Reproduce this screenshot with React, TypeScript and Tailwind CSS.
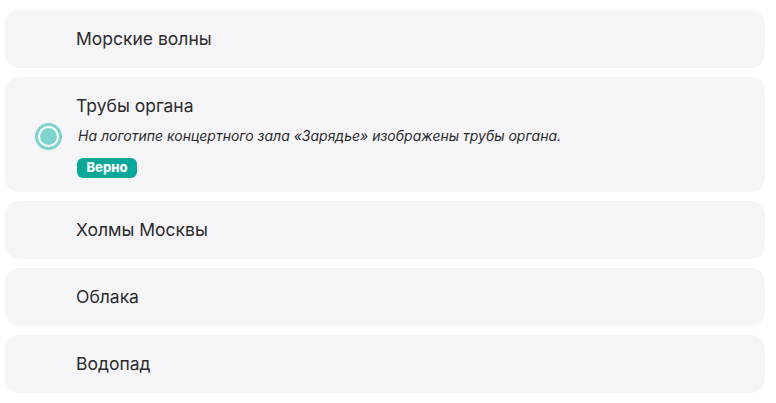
const options = [
  { title: "Морские волны" },
  {
    title: "Трубы органа",
    selected: true,
    note: "На логотипе концертного зала «Зарядье» изображены трубы органа.",
  },
  { title: "Холмы Москвы" },
  { title: "Облака" },
  { title: "Водопад" },
];

export default function App() {
  return (
    <main className="w-[776px] h-[403px] bg-white px-[5px] pt-[10px] font-['Inter',sans-serif] text-[#2b2b2d]">
      <ul className="flex flex-col gap-[9px] w-[760px]">
        {options.map((item, index) =>
          item.selected ? (
            <li
              key={index}
              className="relative flex flex-col items-start rounded-[14px] bg-[#f5f5f7] pl-[71px] pt-[18px] pb-[14px] h-[115px]"
            >
              <span className="absolute left-[30px] top-[46px] flex h-[27px] w-[27px] items-center justify-center rounded-full border-[3px] border-[#7ed3cc] bg-white">
                <span className="h-[17px] w-[17px] rounded-full bg-[#7ed3cc]" />
              </span>
              <span className="text-[17.5px] leading-[22px]">{item.title}</span>
              <span className="mt-[10px] pl-[2px] text-[14px] italic leading-[18px] text-[#2b2b2d]">
                {item.note}
              </span>
              <span className="mt-[13px] ml-[1px] inline-flex h-[20px] w-[60px] items-center justify-center rounded-[6px] bg-[#0aa898] text-[13px] font-extrabold text-white">
                Верно
              </span>
            </li>
          ) : (
            <li
              key={index}
              className="flex h-[58px] items-center rounded-[14px] bg-[#f5f5f7] pl-[71px] text-[17.5px]"
            >
              {item.title}
            </li>
          )
        )}
      </ul>
    </main>
  );
}
